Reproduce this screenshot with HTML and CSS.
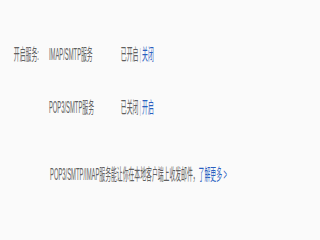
FILE: index.html
```html
<!DOCTYPE html>
<html lang="zh-CN">
<head>
<meta charset="utf-8">
<title>开启服务</title>
<link rel="stylesheet" href="styles.css">
</head>
<body>
<div class="stage">
  <div class="panel">
    <div class="grid">
      <div class="label">开启服务:</div>
      <div class="service">IMAP/SMTP服务</div>
      <div class="status">已开启<span class="sep">|</span><a class="link" href="#">关闭</a></div>

      <div class="label"></div>
      <div class="service">POP3/SMTP服务</div>
      <div class="status">已关闭<span class="sep">|</span><a class="link" href="#">开启</a></div>
    </div>
    <p class="note">POP3/SMTP/IMAP服务能让你在本地客户端上收发邮件，<a class="link" href="#">了解更多 &gt;</a></p>
  </div>
</div>
</body>
</html>
```
FILE: styles.css
```css
html, body {
  margin: 0;
  padding: 0;
  background: #fafafa;
  overflow: hidden;
}
.stage {
  width: 300px;
  height: 225px;
  overflow: hidden;
}
.panel {
  width: 822px;
  padding: 45px 0 0 38px;
  box-sizing: border-box;
  transform: scaleX(0.365);
  transform-origin: 0 0;
  font-family: "Liberation Sans", "Noto Sans CJK SC", sans-serif;
  font-size: 16px;
  line-height: 20px;
  color: #606060;
}
.grid {
  display: grid;
  grid-template-columns: 96px 197px auto;
  row-gap: 33px;
}
.label, .service, .status {
  white-space: nowrap;
}
.sep {
  color: #b5b5b5;
  margin: 0 3px;
}
.link {
  color: #2b5fc0;
  text-decoration: none;
}
.note {
  margin: 47px 0 0 99px;
  white-space: nowrap;
}
```
